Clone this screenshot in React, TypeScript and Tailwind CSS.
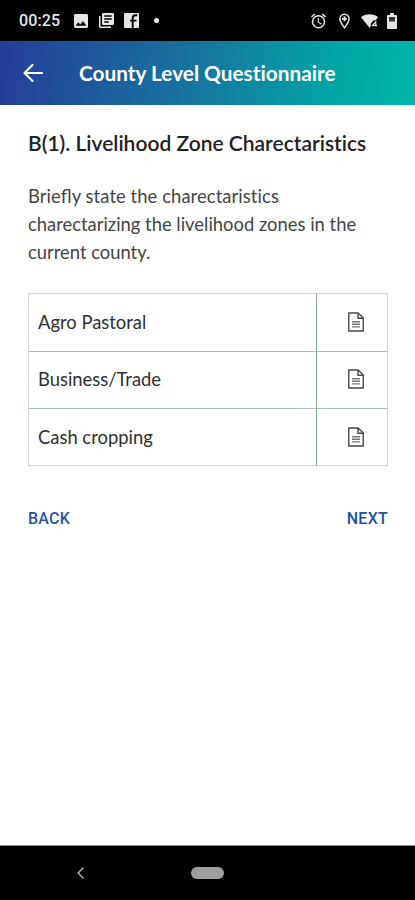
interface ZoneRow {
  id: number;
  label: string;
}

const zones: ZoneRow[] = [
  { id: 1, label: 'Agro Pastoral' },
  { id: 2, label: 'Business/Trade' },
  { id: 3, label: 'Cash cropping' },
];

function DocumentIcon() {
  return (
    <svg width="16" height="20" viewBox="0 0 16 20" fill="none" stroke="#484848" strokeWidth="1.4" aria-hidden="true">
      <path d="M.8 1h9.4l5 5v13H.8V1Z" strokeLinejoin="round" />
      <path d="M10 1v5.2h5.2" />
      <path d="M4 9.7h8M4 12.3h8M4 14.9h8" stroke="#777" strokeWidth="1.4" />
    </svg>
  );
}

function StatusBar() {
  return (
    <div className="flex h-[41px] items-center justify-between bg-black pr-[18px] pl-[19px] text-[#e6e6e6]">
      <div className="flex items-center">
        <span className="w-[55px] font-['Roboto',sans-serif] text-[16px] leading-none font-medium tracking-[0.1px]">00:25</span>
        <svg width="14" height="14" viewBox="3 3 18 18" fill="currentColor" aria-hidden="true">
          <path d="M21 19V5c0-1.1-.9-2-2-2H5c-1.1 0-2 .9-2 2v14c0 1.1.9 2 2 2h14c1.1 0 2-.9 2-2ZM8.5 13.5l2.5 3.01L14.5 12l4.5 6H5l3.5-4.5Z" />
        </svg>
        <svg className="ml-[11px]" width="15" height="15" viewBox="2 2 20 20" fill="currentColor" aria-hidden="true">
          <path d="M4 6H2v14c0 1.1.9 2 2 2h14v-2H4V6Zm16-4H8c-1.1 0-2 .9-2 2v12c0 1.1.9 2 2 2h12c1.1 0 2-.9 2-2V4c0-1.1-.9-2-2-2Zm-1 9H9V9h10v2Zm-4 4H9v-2h6v2Zm4-8H9V5h10v2Z" />
        </svg>
        <svg className="ml-[10px]" width="15" height="15" viewBox="0 0 15 15" aria-hidden="true">
          <rect width="15" height="15" rx="1" fill="currentColor" />
          <path d="M13.3 2.3h-1.7c-2 0-2.9 1-2.9 2.7V15M6 7.6h6.5" fill="none" stroke="#000" strokeWidth="1.9" />
        </svg>
        <span className="ml-[15px] size-[5px] rounded-full bg-[#f0f0f0]" />
      </div>
      <div className="flex items-center">
        <svg width="15" height="16" viewBox="2 1.7 20 20.5" fill="currentColor" aria-hidden="true">
          <path d="m22 5.72-4.6-3.86-1.29 1.53 4.6 3.86L22 5.72ZM7.88 3.39 6.6 1.86 2 5.71l1.29 1.53 4.59-3.85ZM12.5 8H11v6l4.75 2.85.75-1.23-4-2.37V8ZM12 4a9 9 0 1 0 0 18 9 9 0 0 0 0-18Zm0 16a7 7 0 1 1 0-14 7 7 0 0 1 0 14Z" />
        </svg>
        <svg className="ml-[13px]" width="11" height="16" viewBox="0 0 11 16" fill="none" stroke="currentColor" aria-hidden="true">
          <path d="M5.5 14.7C3 11.6.9 8.5.9 5.8a4.6 4.6 0 0 1 9.2 0c0 2.7-2.1 5.8-4.6 8.9Z" strokeWidth="1.5" />
          <path d="M5.5 3.3v5M3 5.8h5" strokeWidth="1.7" />
        </svg>
        <svg className="ml-[11px]" width="18" height="14" viewBox="0 0 18 14" aria-hidden="true">
          <path d="M0 3.2C4.8-.6 12.2-.6 17 3.2L14.4 6.4h-2.2l-2.4 3.5v2.3L8.5 13.8 0 3.2Z" fill="currentColor" />
          <path d="M14.8 12.8V7.7l-3.3 3.7h4.7" fill="none" stroke="currentColor" strokeWidth="1.2" />
        </svg>
        <svg className="ml-[8px]" width="10" height="16" viewBox="0 0 10 16" aria-hidden="true">
          <path d="M3 0h4v2h2q1 0 1 1v12q0 1-1 1H1q-1 0-1-1V3q0-1 1-1h2Z" fill="currentColor" />
          <path d="M2 4h6v4.5H2Z" fill="#333" />
        </svg>
      </div>
    </div>
  );
}

function Header() {
  return (
    <header className="flex h-16 items-center bg-[linear-gradient(100deg,#263c99_0%,#1579a0_50%,#00a8a6_82%,#00b5a8_100%)] pl-[23px] text-white">
      <button type="button" aria-label="Back" className="w-[56px]">
        <svg width="20" height="18" viewBox="0 0 20 18" fill="none" stroke="currentColor" strokeWidth="2.1" strokeLinecap="round" strokeLinejoin="round">
          <path d="M19 9H1.5M9.5 1 1.5 9l8 8" />
        </svg>
      </button>
      <h1 className="text-[20.8px] font-bold whitespace-nowrap">County Level Questionnaire</h1>
    </header>
  );
}

function ZoneTable() {
  return (
    <div className="mt-[27px] h-[173px] divide-y divide-[#a6c3a6] border border-[#ced9d0]">
      {zones.map((zone) => (
        <div key={zone.id} className="flex h-[57px] first:h-[58px]">
          <div className="flex w-[288px] items-center border-r border-[#83b083] pl-[9px] text-[18.4px] text-[#303030]">
            {zone.label}
          </div>
          <button type="button" aria-label={zone.label} className="flex flex-1 items-center justify-center pb-[2px] pl-[8px]">
            <DocumentIcon />
          </button>
        </div>
      ))}
    </div>
  );
}

export default function App() {
  return (
    <div className="flex h-[900px] w-[415px] flex-col overflow-hidden bg-white font-['Lato',sans-serif] [font-variant-ligatures:none]">
      <StatusBar />
      <Header />
      <main className="flex-1 pt-[24px] pr-[27px] pl-[28px]">
        <h2 className="text-[21px] leading-[28px] font-semibold whitespace-nowrap text-[#222]">
          B(1). Livelihood Zone Charectaristics
        </h2>
        <p className="mt-[25px] text-[18.4px] leading-[28px] whitespace-nowrap text-[#444]">
          <span className="tracking-[0.08px]">Brie</span>
          <span className="[font-variant-ligatures:normal]">fl</span>
          <span className="tracking-[0.08px]">y state the charectaristics</span>
          <br />
          charectarizing the livelihood zones in the
          <br />
          current county.
        </p>
        <ZoneTable />
        <div className="mt-[41px] flex justify-between font-['Roboto',sans-serif] text-[16px] leading-[24px] font-medium tracking-[0.25px] text-[#1f55a0]">
          <button type="button">BACK</button>
          <button type="button">NEXT</button>
        </div>
      </main>
      <nav className="flex h-[55px] items-center border-t border-[#888] bg-black pl-[77px]">
        <svg width="7" height="12" viewBox="0 0 7 12" fill="none" stroke="#aaa" strokeWidth="1.6" aria-hidden="true">
          <path d="M6.3.8 1.2 6l5.1 5.2" />
        </svg>
        <span className="ml-[107px] h-[12px] w-[33px] rounded-full bg-[#9e9e9e]" />
      </nav>
    </div>
  );
}
